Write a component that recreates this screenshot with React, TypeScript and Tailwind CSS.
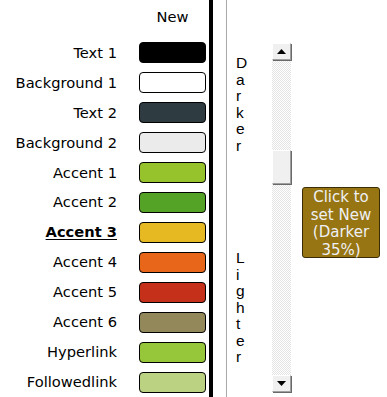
import React from 'react';

const rows = [
  { label: 'Text 1', color: '#000000' },
  { label: 'Background 1', color: '#ffffff' },
  { label: 'Text 2', color: '#2e3b40' },
  { label: 'Background 2', color: '#ebebeb' },
  { label: 'Accent 1', color: '#96c22c' },
  { label: 'Accent 2', color: '#54a226' },
  { label: 'Accent 3', color: '#e6b922', active: true },
  { label: 'Accent 4', color: '#e8661a' },
  { label: 'Accent 5', color: '#c5301b' },
  { label: 'Accent 6', color: '#93885a' },
  { label: 'Hyperlink', color: '#96c63a' },
  { label: 'Followedlink', color: '#bbd282' },
];

function Letters({ word }: { word: string }) {
  return (
    <div className="flex flex-col leading-[16.5px]">
      {word.split('').map((c, i) => (
        <span key={i}>{c}</span>
      ))}
    </div>
  );
}

function ArrowButton({ dir }: { dir: 'up' | 'down' }) {
  return (
    <div className="h-[17px] w-full flex items-center justify-center bg-[#f0f0f0] border border-t-white border-l-white border-r-[#a0a0a0] border-b-[#a0a0a0] shadow-[1px_1px_0_#696969]">
      <svg width="9" height="5" viewBox="0 0 9 5">
        {dir === 'up' ? <polygon points="4.5,0 9,5 0,5" fill="#000" /> : <polygon points="0,0 9,0 4.5,5" fill="#000" />}
      </svg>
    </div>
  );
}

export default function App() {
  return (
    <div className="flex h-[397px] w-[387px] bg-white overflow-hidden text-black font-['DejaVu_Sans',Verdana,sans-serif] text-[14.67px]">
      {/* colour list */}
      <div className="flex flex-col w-[209px] shrink-0">
        <div className="h-[38px] flex pt-[8px] leading-[18px]">
          <div className="w-[139px]" />
          <div className="w-[67px] text-center">New</div>
        </div>
        {rows.map((r) => (
          <div key={r.label} className="h-[30px] flex items-center">
            <div
              className={
                'w-[117px] text-right whitespace-nowrap ' +
                (r.active ? 'font-bold underline underline-offset-2' : '')
              }
            >
              {r.label}
            </div>
            <div
              className="ml-[22px] w-[67px] h-[21px] rounded-[4px] border border-black"
              style={{ backgroundColor: r.color }}
            />
          </div>
        ))}
      </div>
      <div className="w-[4px] h-full bg-black shrink-0" />
      <div className="w-[13px] shrink-0" />
      <div className="w-px h-full bg-[#a9a9a9] shrink-0" />

      {/* darker / lighter picker */}
      <div className="flex flex-col w-[45px] pl-[9px] pt-[55px] font-['Liberation_Sans',Arial,sans-serif] text-[15.5px]">
        <Letters word="Darker" />
        <div className="mt-[96px]">
          <Letters word="Lighter" />
        </div>
      </div>

      <div className="mt-[43px] w-[19px] h-[349px] flex flex-col shrink-0 bg-[repeating-conic-gradient(#e4e4e4_0_25%,#ffffff_0_50%)] bg-size-[2px_2px]">
        <ArrowButton dir="up" />
        <div className="h-[90px]" />
        <div className="h-[34px] w-full bg-[#f0f0f0] border border-t-white border-l-white border-r-[#a0a0a0] border-b-[#a0a0a0] shadow-[1px_1px_0_#696969]" />
        <div className="flex-1" />
        <ArrowButton dir="down" />
      </div>

      <div className="ml-[11px] mt-[187px]">
        <button className="w-[78px] h-[71px] bg-[#977512] border border-[#3b2e07] rounded-[3px] text-[#eef0f4] text-center leading-[17.5px] pt-[1px] font-['DejaVu_Sans',Verdana,sans-serif] text-[15px]">
          Click to
          <br />
          set New
          <br />
          (Darker
          <br />
          35%)
        </button>
      </div>
    </div>
  );
}
